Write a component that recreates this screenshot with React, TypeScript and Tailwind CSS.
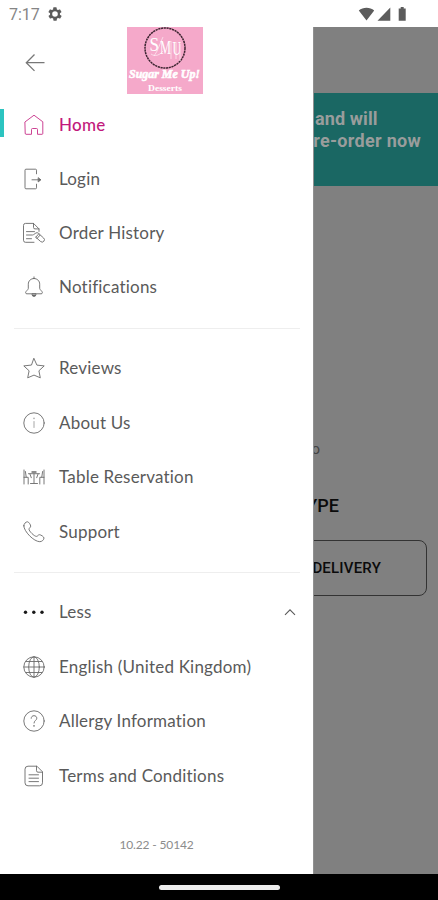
import type { ReactNode } from "react";

const icon = (children: ReactNode) => (
  <svg
    viewBox="0 0 24 24"
    className="size-6 shrink-0"
    fill="none"
    stroke="currentColor"
    strokeWidth="0.9"
    strokeLinecap="round"
    strokeLinejoin="round"
  >
    {children}
  </svg>
);

const HomeIcon = icon(
  <path d="M3.200 8.800 12 2.200l8.800 6.600V20.500a.8.8 0 0 1-.8.8H15.500V16.500a1 1 0 0 0-1-1h-4a1 1 0 0 0-1 1v4.800H4a.8.8 0 0 1-.8-.8z" />,
);
const LoginIcon = icon(
  <>
    <path d="M14.500 6.800V3.200a1 1 0 0 0-1-1H4a1 1 0 0 0-1 1v17.600a1 1 0 0 0 1 1h9.500a1 1 0 0 0 1-1v-3.600" />
    <path d="M10 12.800h8.500" />
    <path d="m16.500 10.900 2.300 1.900-2.300 1.900z" fill="currentColor" />
  </>,
);
const OrderIcon = icon(
  <>
    <path d="M12 21.300H3.500a2 2 0 0 1-2-2V4.400a2 2 0 0 1 2-2h8l5.500 5.500v2.500M11.500 2.400v4a1.500 1.500 0 0 0 1.500 1.500h4" />
    <path d="M4.500 10.600h8M4.500 14h6M4.500 17.700h5" />
    <path d="m11.500 13.700 2.400-1.700a2 2 0 0 1 2.400.2l5.300 4.800a2.300 2.300 0 0 1-3 3.500l-4.800-4.300M13.800 16.200l3-3.400M18 14.200l-3.200 3.500" />
  </>,
);
const BellIcon = icon(
  <>
    <path d="M12 3.500c-3.500 0-5.700 2.600-5.700 5.700v4.300c0 1.200-2.700 2.700-2.700 4.200 0 .8.6 1.100 1.300 1.100h14.200c.7 0 1.300-.3 1.300-1.100 0-1.500-2.700-3-2.700-4.200V9.200c0-3.100-2.200-5.700-5.700-5.700z" />
    <path d="M12 3.500V1.900M10 19.200c0 1.200.8 2.300 2 2.300s2-1.100 2-2.300z" />
    <path d="M10.800 20.600h2.400" strokeWidth="1.500" />
  </>,
);
const StarIcon = icon(
  <path d="m12 2.600 2.900 6.500 7.300.8-5.300 4.900 1.400 7-6.300-2.700-6.300 2.700 1.400-7L1.800 9.900l7.300-.8z" />,
);
const InfoIcon = icon(
  <>
    <circle cx="12" cy="12" r="10.200" />
    <path d="M12 10.500v6" strokeOpacity=".65" />
    <path d="M12 7.200v.3" strokeWidth="1.400" strokeOpacity=".65" />
  </>,
);
const TableIcon = icon(
  <>
    <path d="M2 5v14M2 12.300h4.200V19M22 5v14M22 12.300h-4.200V19M3.400 6.500l.8 5.500M20.600 6.500l-.8 5.500" />
    <path d="M6.500 8.700h11M8 9.200l1.300 3.500M16 9.200l-1.300 3.500M12 9v9M8.500 18.500h7" />
    <path d="M10 7h4" strokeWidth="1.400" />
  </>,
);
const PhoneIcon = icon(
  <path d="M1.800 5.800c0-2 1.900-4 3.700-4 1.200 0 3.200 3 3.200 4.300 0 1.500-1.700 1.800-1.700 3.100 0 1.900 5.300 7.200 7.400 7.200 1.300 0 1.700-1.700 3.100-1.700 1.300 0 4.500 2.100 4.500 3.300 0 1.800-2.100 3.700-4.200 3.700C12 21.700 1.800 11.500 1.800 5.800z" />,
);
const DotsIcon = icon(
  <g fill="currentColor" stroke="none" className="text-black">
    <circle cx="3.500" cy="12.300" r="1.700" />
    <circle cx="11.800" cy="12.300" r="1.700" />
    <circle cx="20" cy="12.300" r="1.700" />
  </g>,
);
const GlobeIcon = icon(
  <>
    <circle cx="12" cy="12" r="10.200" />
    <ellipse cx="12" cy="12" rx="5.300" ry="10.200" />
    <path d="M12 1.800v20.400M1.800 12h20.400M4 6.500h16M4 17.500h16" />
  </>,
);
const HelpIcon = icon(
  <>
    <circle cx="12" cy="12" r="10.200" />
    <path d="M9.200 9.300c0-1.600 1.200-2.600 2.800-2.600s2.800 1 2.800 2.500c0 2.200-2.800 2.300-2.800 4.800" />
    <path d="M12 16.700v.2" strokeWidth="1.500" />
  </>,
);
const TermsIcon = icon(
  <>
    <path d="M14.500 2.200H6a3 3 0 0 0-3 3v13.600a3 3 0 0 0 3 3h11.500a3 3 0 0 0 3-3V8.200zM14.500 2.200v4.500a1.500 1.500 0 0 0 1.500 1.500h4.500" />
    <path d="M7 10.800h9.500M7 14.200h9.500M7 17.600h9.500" />
  </>,
);

type Item = { label: string; glyph: ReactNode; active?: boolean; expanded?: boolean };

const accountItems: Item[] = [
  { label: "Home", glyph: HomeIcon, active: true },
  { label: "Login", glyph: LoginIcon },
  { label: "Order History", glyph: OrderIcon },
  { label: "Notifications", glyph: BellIcon },
];
const shopItems: Item[] = [
  { label: "Reviews", glyph: StarIcon },
  { label: "About Us", glyph: InfoIcon },
  { label: "Table Reservation", glyph: TableIcon },
  { label: "Support", glyph: PhoneIcon },
];
const moreItems: Item[] = [
  { label: "Less", glyph: DotsIcon, expanded: true },
  { label: "English (United Kingdom)", glyph: GlobeIcon },
  { label: "Allergy Information", glyph: HelpIcon },
  { label: "Terms and Conditions", glyph: TermsIcon },
];

function Row({ label, glyph, active, expanded }: Item) {
  return (
    <li className={`flex flex-1 items-center ${active ? "text-[#c2187c]" : "text-[#5a5a5a]"}`}>
      <span className={`-mt-1 h-7 w-1 ${active ? "bg-[#2cc4c0]" : ""}`} />
      <span className="ml-[18px] flex opacity-90">{glyph}</span>
      <span
        className={`ml-[13px] text-[17px] leading-6 whitespace-nowrap ${active ? "font-medium tracking-[0.3px]" : "tracking-[0.2px]"}`}
      >
        {label}
      </span>
      {expanded && (
        <svg viewBox="0 0 12 8" className="mr-[17px] ml-auto h-2 w-3" fill="none" stroke="currentColor" strokeWidth="1.100">
          <path d="m1 6.800 5-5 5 5" />
        </svg>
      )}
    </li>
  );
}

function Logo() {
  return (
    <div className="h-[67px] w-[76px] overflow-hidden bg-[#f5a9ca]">
      <svg viewBox="0 0 76 67" className="h-full w-full">
        <circle cx="38" cy="21" r="20" fill="none" stroke="#3d2531" strokeWidth="1.500" strokeDasharray="2.200 .6" />
        <path
          d="M24 27c4 3 9 1 12-3M36 10c-3 6-5 14-9 19M44 14v18M49 15v17M53 17v17"
          fill="none"
          stroke="#fff"
          strokeWidth=".7"
          strokeOpacity=".8"
        />
        <g fill="#fff" fontFamily="'Liberation Serif', serif">
          <text x="22.500" y="24" fontSize="18" textLength="9.500" lengthAdjust="spacingAndGlyphs">S</text>
          <text x="33" y="27" fontSize="18" textLength="11" lengthAdjust="spacingAndGlyphs">M</text>
          <text x="45.500" y="28" fontSize="18" textLength="8.500" lengthAdjust="spacingAndGlyphs">U</text>
          <text x="2" y="51" fontSize="12.500" fontWeight="bold" fontStyle="italic" stroke="#fff" strokeWidth=".6" textLength="71" lengthAdjust="spacingAndGlyphs">Sugar Me Up!</text>
          <text x="21" y="64" fontSize="8.500" fontWeight="bold" textLength="34" lengthAdjust="spacingAndGlyphs">Desserts</text>
        </g>
      </svg>
    </div>
  );
}

export default function App() {
  return (
    <div className="flex h-[900px] w-[438px] flex-col overflow-hidden bg-white font-['Lato',sans-serif]">
      <header className="flex h-[27px] shrink-0 items-center text-[#5c5c5c]">
        <span className="ml-[9px] w-[38px] pt-0.5 font-['Roboto',sans-serif] text-[16px] leading-5 text-[#858585]">7:17</span>
        <svg viewBox="0 0 24 24" className="size-4" fill="currentColor">
          <path fillRule="evenodd" d="M19.400 13a7.500 7.500 0 0 0 0-2l2.100-1.600a.5.500 0 0 0 .1-.6l-2-3.500a.5.500 0 0 0-.6-.2l-2.500 1a7.300 7.300 0 0 0-1.700-1l-.4-2.600a.5.500 0 0 0-.5-.5h-4a.5.500 0 0 0-.5.500L9.100 5.100a7.300 7.300 0 0 0-1.700 1l-2.500-1a.5.500 0 0 0-.6.200l-2 3.500a.5.500 0 0 0 .1.600L4.600 11a7.500 7.500 0 0 0 0 2l-2.100 1.600a.5.500 0 0 0-.1.600l2 3.500c.1.200.4.300.6.200l2.500-1a7.300 7.300 0 0 0 1.700 1l.4 2.600c0 .3.200.5.500.5h4c.3 0 .5-.2.500-.5l.4-2.600a7.300 7.300 0 0 0 1.700-1l2.500 1c.2.100.5 0 .6-.2l2-3.500a.5.500 0 0 0-.1-.6zM12 16.200a4.200 4.200 0 1 1 0-8.400 4.200 4.200 0 0 1 0 8.400z" />
        </svg>
        <svg viewBox="0 0 50 16" className="mr-[30px] ml-auto h-4 w-[50px]" fill="currentColor">
          <path d="M.8 4.500C5 .8 12 .8 16.200 4.500L8.500 14.500zM19.500 14.700h12.800V1.500zM40.700 2.500h2V1h3v1.500h2v12.200h-7z" />
        </svg>
      </header>

      <main className="flex h-[847px] shrink-0">
        <aside className="flex w-[313px] shrink-0 flex-col bg-white">
          <div className="flex h-[71px] items-start">
            <svg viewBox="0 0 20 20" className="mt-[26px] ml-[25px] size-5" fill="none" stroke="#777" strokeWidth="1.300">
              <path d="M19.500 9.700H1.500M9.500 1.500 1.300 9.700l8.200 8.200" />
            </svg>
            <div className="ml-[82px]"><Logo /></div>
          </div>
          <ul className="flex h-[216px] flex-col">{accountItems.map((i) => <Row key={i.label} {...i} />)}</ul>
          <div className="flex h-[27px] items-center pt-[2px]"><hr className="mr-[13px] ml-[14px] flex-1 border-[#eeeeee]" /></div>
          <ul className="flex h-[218px] flex-col">{shopItems.map((i) => <Row key={i.label} {...i} />)}</ul>
          <div className="flex h-[26px] items-center"><hr className="mr-[13px] ml-[14px] flex-1 border-[#eeeeee]" /></div>
          <ul className="flex h-[218px] flex-col">{moreItems.map((i) => <Row key={i.label} {...i} />)}</ul>
          <p className="mt-[34px] text-center text-[12px] leading-4 tracking-[-0.15px] text-[#8c8c8c]">10.22 - 50142</p>
        </aside>

        <section className="flex w-[125px] flex-col items-end overflow-hidden border-l border-[#909090] bg-[#808080] font-['Roboto',sans-serif]">
          <div className="h-[66px] shrink-0" />
          <div className="h-[93px] w-full shrink-0 bg-[#1a6763] pt-[15px] text-[18px] leading-[22px] font-bold text-[#999d9c]">
            <p className="ml-[1px] tracking-[0.1px] whitespace-nowrap">and will</p>
            <p className="flex w-[107px] justify-end tracking-[0.3px] whitespace-nowrap">re-order now</p>
          </div>
          <p className="mt-[251px] mr-[118px] text-[15px] leading-6 text-[#444]">o</p>
          <h2 className="mt-[33px] mr-[99px] text-[18px] leading-6 font-medium text-[#0b0b0b]">TYPE</h2>
          <div className="mt-[22px] mr-[11px] flex h-[56px] w-[250px] shrink-0 items-center justify-end rounded-lg border border-[#333] pr-[45px] text-[15px] font-medium tracking-[0.2px] text-[#0b0b0b]">
            DELIVERY
          </div>
        </section>
      </main>

      <footer className="flex h-[26px] shrink-0 items-center justify-center bg-black">
        <span className="h-[5px] w-[121px] rounded-full bg-[#ececec]" />
      </footer>
    </div>
  );
}
